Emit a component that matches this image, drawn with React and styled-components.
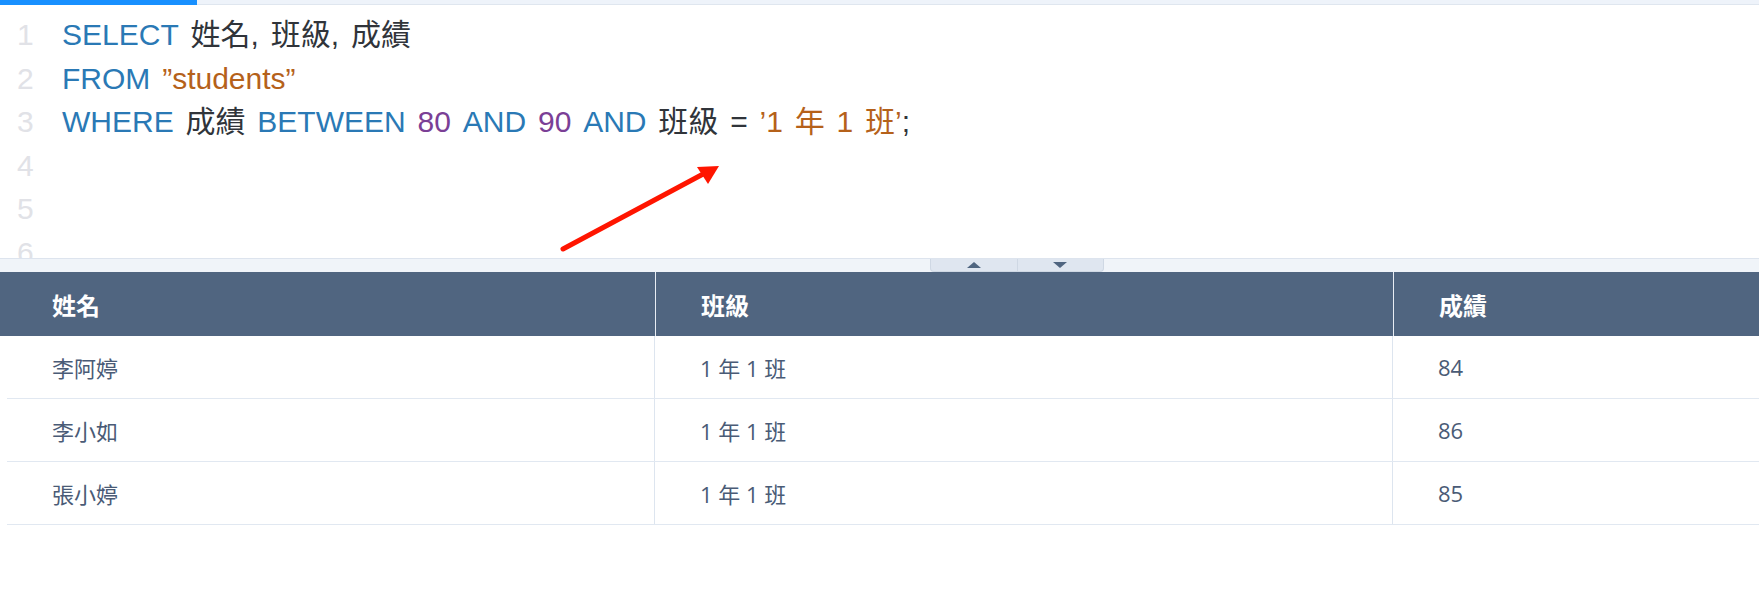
import React from "react";
import styled, { createGlobalStyle } from "styled-components";

const GlobalStyle = createGlobalStyle`
  html, body {
    margin: 0;
    padding: 0;
    background: #ffffff;
    overflow: hidden;
  }
  * {
    box-sizing: border-box;
  }
`;

const Page = styled.div`
  position: relative;
  width: 1759px;
  height: 614px;
  background: #ffffff;
`;

const ProgressTrack = styled.div`
  height: 5px;
  background: #eef3fa;
  border-bottom: 1px solid #dfe6ef;
`;

const ProgressFill = styled.div`
  width: 197px;
  height: 5px;
  background: #1890ff;
`;

const Editor = styled.div`
  height: 253px;
  overflow: hidden;
  padding-top: 8px;
  font-family: "Liberation Sans", Arial, "Noto Sans CJK TC", sans-serif;
  font-size: 30px;
  line-height: 43.5px;
  word-spacing: 3.5px;
`;

const Line = styled.div`
  display: flex;
  white-space: pre;
`;

const LineNo = styled.span`
  width: 62px;
  padding-left: 17px;
  color: #e1e2e7;
  flex: none;
`;

const Tok = styled.span`
  color: ${(p) =>
    p.$k === "kw"
      ? "#2a79b5"
      : p.$k === "str"
      ? "#b5611a"
      : p.$k === "num"
      ? "#7b3f96"
      : "#30343a"};
`;

const Splitter = styled.div`
  height: 14px;
  background: #f0f4f9;
  border-top: 1px solid #dde4ee;
  display: flex;
  justify-content: flex-start;
  padding-left: 930px;
`;

const Handle = styled.div`
  display: flex;
  width: 174px;
  height: 13px;
  background: #dfe6f0;
  border: 1px solid #cfd8e4;
  border-top: none;
  border-radius: 0 0 4px 4px;
`;

const HandleHalf = styled.div`
  flex: 1;
  display: flex;
  align-items: center;
  justify-content: center;
  & + & {
    border-left: 1px solid #cfd8e4;
  }
`;

const Tri = styled.span`
  width: 0;
  height: 0;
  border-left: 7px solid transparent;
  border-right: 7px solid transparent;
  ${(p) =>
    p.$up
      ? "border-bottom: 6px solid #4f6580;"
      : "border-top: 6px solid #4f6580;"}
`;

const Table = styled.div`
  font-family: "Open Sans", "Noto Sans CJK TC", sans-serif;
`;

const HeadRow = styled.div`
  display: grid;
  grid-template-columns: 655px 738px 1fr;
  height: 64px;
  background: #506580;
`;

const HeadCell = styled.div`
  display: flex;
  align-items: center;
  padding-left: ${(p) => (p.$first ? "52px" : "45px")};
  color: #ffffff;
  font-size: 24px;
  font-weight: 700;
  & + & {
    border-left: 1px solid #e8edf4;
  }
`;

const BodyRow = styled.div`
  display: grid;
  grid-template-columns: 647px 738px 1fr;
  margin-left: 7px;
  height: 63px;
  border-bottom: 1px solid #e1e8f1;
`;

const Cell = styled.div`
  display: flex;
  align-items: center;
  padding-left: 45px;
  color: #4a5b76;
  font-size: 22px;
  & + & {
    border-left: 1px solid #dde5ef;
  }
`;

const Arrow = styled.svg`
  position: absolute;
  left: 0;
  top: 0;
  pointer-events: none;
`;

const code = [
  [["kw", "SELECT"], ["", " 姓名, 班級, 成績"]],
  [["kw", "FROM"], ["", " "], ["str", "”students”"]],
  [
    ["kw", "WHERE"],
    ["", " 成績 "],
    ["kw", "BETWEEN"],
    ["", " "],
    ["num", "80"],
    ["", " "],
    ["kw", "AND"],
    ["", " "],
    ["num", "90"],
    ["", " "],
    ["kw", "AND"],
    ["", " 班級 = "],
    ["str", "’1 年 1 班’"],
    ["", ";"],
  ],
  [],
  [],
  [],
];

const rows = [
  ["李阿婷", "1 年 1 班", "84"],
  ["李小如", "1 年 1 班", "86"],
  ["張小婷", "1 年 1 班", "85"],
];

export default function App() {
  return (
    <Page>
      <GlobalStyle />
      <ProgressTrack>
        <ProgressFill />
      </ProgressTrack>
      <Editor>
        {code.map((toks, i) => (
          <Line key={i}>
            <LineNo>{i + 1}</LineNo>
            {toks.map(([k, t], j) => (
              <Tok key={j} $k={k}>
                {t}
              </Tok>
            ))}
          </Line>
        ))}
      </Editor>
      <Splitter>
        <Handle>
          <HandleHalf>
            <Tri $up />
          </HandleHalf>
          <HandleHalf>
            <Tri />
          </HandleHalf>
        </Handle>
      </Splitter>
      <Table>
        <HeadRow>
          <HeadCell $first>姓名</HeadCell>
          <HeadCell>班級</HeadCell>
          <HeadCell>成績</HeadCell>
        </HeadRow>
        {rows.map((r, i) => (
          <BodyRow key={i}>
            {r.map((c, j) => (
              <Cell key={j}>{c}</Cell>
            ))}
          </BodyRow>
        ))}
      </Table>
      <Arrow width="1759" height="614" viewBox="0 0 1759 614">
        <line
          x1="563"
          y1="249"
          x2="705"
          y2="173"
          stroke="#ff1500"
          strokeWidth="5"
          strokeLinecap="round"
        />
        <polygon points="719,166 697,167 708,184" fill="#ff1500" />
      </Arrow>
    </Page>
  );
}
